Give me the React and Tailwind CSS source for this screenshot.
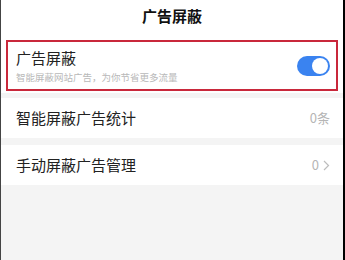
import React from 'react';

function Toggle() {
   return (
      <div className="w-[33px] h-[20px] rounded-full bg-[#3a83f0] flex items-center justify-end pr-[2px]">
         <div className="w-[16px] h-[16px] rounded-full bg-white" />
      </div>
   );
}

function Row({ title, right }) {
   return (
      <div className="h-[40px] bg-white flex items-center justify-between pl-[15px] pr-[13px]">
         <span className="text-[15px] text-[#222]">{title}</span>
         <span className="text-[13px] text-[#b5b5b5] flex items-center gap-[4px]">{right}</span>
      </div>
   );
}

export default function App() {
   return (
      <div
         className="w-[345px] h-[260px] bg-[#f4f4f4] flex flex-col border-r-2 border-r-black border-l border-l-[#444]"
         style={{ fontFamily: '"Noto Sans CJK SC", "Noto Sans", sans-serif' }}
      >
         <div className="h-[33px] bg-white flex items-center justify-center shrink-0">
            <span className="text-[15px] font-bold text-[#111]">广告屏蔽</span>
         </div>

         <div className="bg-white pt-[7px] pb-[2px] px-[5px]">
            <div className="h-[51px] border-2 border-[#c9283b] flex items-center justify-between pl-[8px] pr-[6px]">
               <div className="flex flex-col">
                  <span className="text-[15px] leading-[20px] text-[#222]">广告屏蔽</span>
                  <span className="mt-[2px] text-[9.5px] leading-[14px] text-[#b8b8b8]">
                     智能屏蔽网站广告，为你节省更多流量
                  </span>
               </div>
               <Toggle />
            </div>
         </div>

         <div className="mt-[5px]">
            <Row title="智能屏蔽广告统计" right="0条" />
         </div>
         <div className="mt-[7px]">
            <Row
               title="手动屏蔽广告管理"
               right={
                  <>
                     <span>0</span>
                     <svg width="7" height="11" viewBox="0 0 7 11" fill="none">
                        <path d="M1 1l4.5 4.5L1 10" stroke="#bdbdbd" strokeWidth="1.2" />
                     </svg>
                  </>
               }
            />
         </div>
      </div>
   );
}
